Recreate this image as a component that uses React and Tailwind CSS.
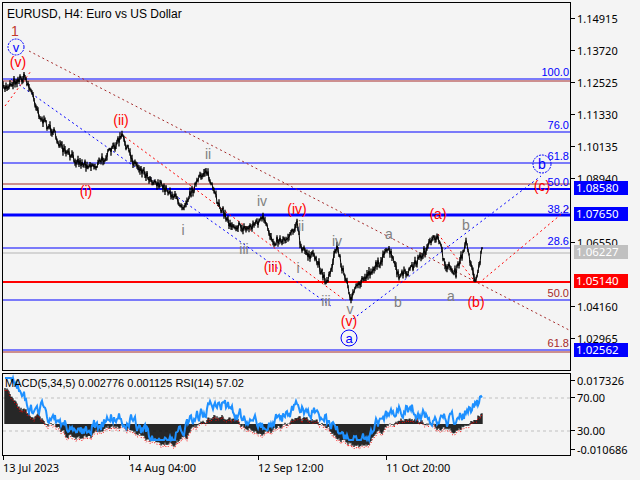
import React from "react";

// seeded random so the candles look the same each time
function rng(seed) {
  let s = seed;
  return () => {
    s = (s * 16807) % 2147483647;
    return (s - 1) / 2147483646;
  };
}

const anchors = [
  [2, 88], [14, 80], [24, 76], [32, 95], [40, 118], [52, 130], [62, 150], [80, 162],
  [95, 165], [110, 150], [121, 135], [132, 160], [150, 178], [168, 190], [182, 205],
  [197, 180], [205, 168], [214, 195], [228, 222], [245, 228], [262, 218], [272, 240],
  [285, 238], [296, 222], [300, 248], [315, 258], [326, 282], [336, 245], [342, 270],
  [350, 296], [362, 278], [378, 262], [388, 248], [398, 276], [408, 270], [420, 255],
  [437, 233], [443, 262], [455, 272], [466, 240], [470, 265], [475, 280], [482, 244],
];

function buildPrice() {
  const r = rng(7);
  const pts = [];
  for (let i = 0; i < anchors.length - 1; i++) {
    const [x0, y0] = anchors[i];
    const [x1, y1] = anchors[i + 1];
    for (let x = x0; x < x1; x++) {
      const t = (x - x0) / (x1 - x0);
      const y = y0 + (y1 - y0) * t + (r() - 0.5) * 8;
      pts.push([x, y, r() * 6 + 2]);
    }
  }
  return pts;
}

function buildOsc() {
  const r = rng(11);
  const hist = [];
  const rsi = [];
  let v = 40;
  let q = 380;
  for (let x = 4; x < 482; x++) {
    const base = x < 32
      ? 40 - x * 1.3
      : -6 + Math.sin(x / 15) * 9 + Math.sin(x / 37 + 1) * 7 + (x > 370 ? 6 : 0);
    v = v * 0.7 + base * 0.3 + (r() - 0.5) * 5;
    hist.push([x, v]);
    q = q * 0.6 + (414 - base * 1.3) * 0.4 + (r() - 0.5) * 12;
    rsi.push([x, Math.max(378, Math.min(440, q))]);
  }
  return { hist, rsi };
}

const price = buildPrice();
const osc = buildOsc();

const hlines = [
  { y: 78, c: "#0000ff", w: 1 }, { y: 80, c: "#a52a2a", w: 1 },
  { y: 131, c: "#0000ff", w: 1 }, { y: 162, c: "#0000ff", w: 1 },
  { y: 183, c: "#a52a2a", w: 1 }, { y: 188, c: "#0000ff", w: 2 },
  { y: 214, c: "#0000ff", w: 3 }, { y: 247, c: "#0000ff", w: 1 },
  { y: 252, c: "#b4b4b4", w: 1 }, { y: 281, c: "#ff0000", w: 2 },
  { y: 299, c: "#0000ff", w: 1 }, { y: 349, c: "#0000ff", w: 1 },
  { y: 351, c: "#a52a2a", w: 1 },
];

const fibs = [
  ["100.0", 75, "#0000ff"], ["76.0", 128, "#0000ff"], ["61.8", 159, "#0000ff"],
  ["50.0", 185, "#0000ff"], ["38.2", 212, "#0000ff"], ["28.6", 244, "#0000ff"],
  ["50.0", 296, "#a52a2a"], ["61.8", 346, "#a52a2a"],
];

const waves = [
  ["1", 14, 35, "#c0392b"], ["(v)", 17, 66, "#ff0000"], ["(ii)", 120, 124, "#ff0000"],
  ["(i)", 85, 195, "#ff0000"], ["ii", 207, 158, "#808080"], ["i", 182, 234, "#808080"],
  ["iv", 261, 205, "#808080"], ["(iv)", 296, 213, "#ff0000"], ["ii", 300, 230, "#808080"],
  ["iii", 243, 253, "#808080"], ["(iii)", 272, 271, "#ff0000"], ["i", 297, 272, "#808080"],
  ["iv", 336, 245, "#808080"], ["iii", 325, 305, "#808080"], ["v", 349, 313, "#808080"],
  ["(v)", 348, 325, "#ff0000"], ["a", 388, 238, "#808080"], ["b", 397, 306, "#808080"],
  ["(a)", 437, 218, "#ff0000"], ["b", 465, 229, "#808080"], ["a", 450, 300, "#808080"],
  ["(b)", 475, 306, "#ff0000"], ["(c)", 541, 190, "#ff0000"],
];

const ticks = [
  ["1.14915", 19], ["1.13720", 51], ["1.12525", 83], ["1.11330", 115], ["1.10135", 147],
  ["1.08940", 179], ["1.06550", 243], ["1.04160", 307], ["1.02965", 339],
];

const boxes = [
  ["1.08580", 188, "bg-[#0000ff]"], ["1.07650", 214, "bg-[#0000ff]"],
  ["1.06227", 252, "bg-[#c0c0c0]"], ["1.05140", 281, "bg-[#ff0000]"],
  ["1.02562", 350, "bg-[#0000ff]"],
];

function MainChart() {
  return (
    <svg width="568" height="369" viewBox="2 2 568 369" className="block">
      {hlines.map((l, i) => (
        <line key={i} x1="2" x2="570" y1={l.y} y2={l.y} stroke={l.c} strokeWidth={l.w} />
      ))}
      {/* trend channels */}
      <line x1="28" y1="50" x2="570" y2="330" stroke="#a52a2a" strokeDasharray="2 3" />
      <line x1="10" y1="78" x2="330" y2="305" stroke="#0000ff" strokeDasharray="2 3" />
      <line x1="4" y1="105" x2="30" y2="70" stroke="#ff0000" strokeDasharray="2 3" />
      <line x1="120" y1="133" x2="345" y2="300" stroke="#ff0000" strokeDasharray="2 3" />
      <line x1="352" y1="318" x2="540" y2="175" stroke="#0000ff" strokeDasharray="2 3" />
      <line x1="478" y1="282" x2="570" y2="205" stroke="#ff0000" strokeDasharray="2 3" />
      <line x1="437" y1="233" x2="475" y2="282" stroke="#ff0000" strokeDasharray="2 3" />
      {price.map(([x, y, h], i) => (
        <line key={i} x1={x} x2={x} y1={y - h / 2} y2={y + h / 2} stroke="#000" strokeWidth="1.3" />
      ))}
      <polyline fill="none" stroke="#000" strokeWidth="1" points={price.map(([x, y]) => `${x},${y}`).join(" ")} />
      <circle cx="15" cy="46" r="8" fill="none" stroke="#0000ff" strokeDasharray="2 1" />
      <text x="15" y="51" fontSize="13" fill="#0000ff" textAnchor="middle" fontFamily="Liberation Sans">v</text>
      <circle cx="348" cy="337" r="8" fill="none" stroke="#0000ff" />
      <text x="348" y="342" fontSize="13" fill="#0000ff" textAnchor="middle" fontFamily="Liberation Sans">a</text>
      <circle cx="541" cy="163" r="9" fill="none" stroke="#0000ff" strokeDasharray="2 1" />
      <text x="541" y="168" fontSize="14" fill="#0000ff" textAnchor="middle" fontFamily="Liberation Sans">b</text>
      {waves.map(([t, x, y, c], i) => (
        <text key={i} x={x} y={y} fontSize="14" fill={c} textAnchor="middle" fontFamily="Liberation Sans">{t}</text>
      ))}
      {fibs.map(([t, y, c], i) => (
        <text key={i} x="568" y={y} fontSize="11" fill={c} textAnchor="end" fontFamily="Liberation Sans">{t}</text>
      ))}
      <text x="6" y="17" fontSize="12" fill="#000" fontFamily="Liberation Sans">EURUSD, H4:  Euro vs US Dollar</text>
    </svg>
  );
}

function SubChart() {
  return (
    <svg width="568" height="82" viewBox="2 374 568 82" className="block">
      <line x1="2" x2="570" y1="398" y2="398" stroke="#c0c0c0" strokeDasharray="3 3" />
      <line x1="2" x2="570" y1="431" y2="431" stroke="#c0c0c0" strokeDasharray="3 3" />
      {osc.hist.map(([x, v], i) => (
        <line key={i} x1={x} x2={x} y1="424" y2={424 - v} stroke="#000" strokeWidth="1.2" />
      ))}
      <polyline fill="none" stroke="#ff0000" strokeWidth="1" strokeDasharray="1 2"
        points={osc.hist.map(([x, v]) => `${x},${426 - v}`).join(" ")} />
      <polyline fill="none" stroke="#1e90ff" strokeWidth="2" points={osc.rsi.map(([x, y]) => `${x},${y}`).join(" ")} />
      <text x="4" y="387" fontSize="11" fill="#000" fontFamily="Liberation Sans">MACD(5,34,5) 0.002776 0.001125 RSI(14) 57.02</text>
    </svg>
  );
}

export default function App() {
  return (
    <div className="w-[640px] h-[480px] bg-[#f4f4f4] relative overflow-hidden font-['Liberation_Sans',sans-serif] text-[11px] text-black">
      <div className="flex flex-col pt-[2px] pl-[2px]">
        <div className="flex">
          <div className="border border-black border-r-0 w-[568px] h-[369px] overflow-hidden">
            <MainChart />
          </div>
          <div className="relative w-[70px] h-[369px] border-l border-black">
            {ticks.map(([t, y]) => (
              <div key={t} className="absolute left-0 flex items-center leading-none" style={{ top: y - 8 }}>
                <span className="w-[4px] h-px bg-black" />
                <span className="pl-[2px]">{t}</span>
              </div>
            ))}
            {boxes.map(([t, y, c]) => (
              <div key={t} className={`absolute left-[3px] w-[54px] h-[14px] text-white text-[11.5px] leading-[14px] pl-[2px] ${c}`} style={{ top: y - 9 }}>
                {t}
              </div>
            ))}
          </div>
        </div>
        <div className="flex mt-[2px]">
          <div className="border border-black border-r-0 w-[568px] h-[83px] overflow-hidden">
            <SubChart />
          </div>
          <div className="relative w-[70px] h-[83px] border-l border-black">
            {[["0.017326", 8], ["70.00", 25], ["30.00", 58], ["-0.010686", 77]].map(([t, y]) => (
              <div key={t} className="absolute left-0 flex items-center leading-none" style={{ top: y - 6 }}>
                <span className="w-[4px] h-px bg-black" />
                <span className="pl-[2px]">{t}</span>
              </div>
            ))}
          </div>
        </div>
        <div className="relative h-[22px] w-[568px]">
          {[["13 Jul 2023", 1], ["14 Aug 04:00", 127], ["12 Sep 12:00", 256], ["11 Oct 20:00", 384]].map(([t, x]) => (
            <div key={t} className="absolute top-0 flex flex-col" style={{ left: x }}>
              <span className="w-px h-[4px] bg-black" />
              <span className="pt-[2px] leading-none">{t}</span>
            </div>
          ))}
        </div>
      </div>
    </div>
  );
}
